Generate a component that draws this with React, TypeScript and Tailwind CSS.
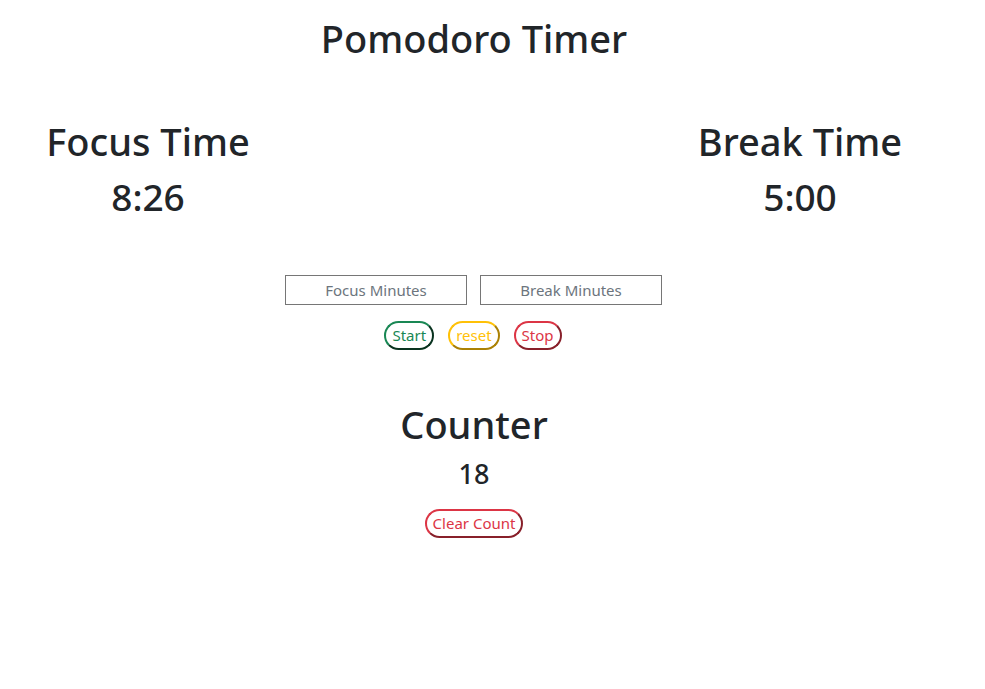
import React from "react";

const font = { fontFamily: '"Noto Sans", "Open Sans", sans-serif' };

export default function App() {
  return (
    <div className="w-[985px] h-[689px] bg-white text-[#212529]" style={font}>
      <div className="w-[948px] flex flex-col items-center">
        <h1 className="mt-4 text-[38px] leading-[44px] font-medium">Pomodoro Timer</h1>

        <div className="w-full flex justify-between mt-[59px]">
          <div className="w-[296px] flex flex-col items-center">
            <h1 className="text-[38px] leading-[44px] font-medium">Focus Time</h1>
            <h1 className="mt-3 text-[37px] leading-[44px] font-medium">8:26</h1>
          </div>
          <div className="w-[296px] flex flex-col items-center">
            <h1 className="text-[38px] leading-[44px] font-medium">Break Time</h1>
            <h1 className="mt-3 text-[37px] leading-[44px] font-medium">5:00</h1>
          </div>
        </div>

        <div className="mt-[56px] flex gap-[13px] ml-[-1px]">
          <input
            placeholder="Focus Minutes"
            className="w-[182px] h-[30px] border border-[#767676] text-center text-[15px] placeholder:text-[#6c757d] outline-none"
          />
          <input
            placeholder="Break Minutes"
            className="w-[182px] h-[30px] border border-[#767676] text-center text-[15px] placeholder:text-[#6c757d] outline-none"
          />
        </div>

        <div className="mt-4 flex gap-[14px] ml-[-2px]">
          <button className="h-[29px] px-[6px] rounded-full border-2 [border-style:outset] border-[#198754] text-[#198754] text-[15px] leading-none">
            Start
          </button>
          <button className="h-[29px] px-[6px] rounded-full border-2 [border-style:outset] border-[#ffc107] text-[#ffc107] text-[15px] leading-none">
            reset
          </button>
          <button className="h-[29px] px-[6px] rounded-full border-2 [border-style:outset] border-[#dc3545] text-[#dc3545] text-[15px] leading-none">
            Stop
          </button>
        </div>

        <h1 className="mt-[52px] text-[38px] leading-[44px] font-medium">Counter</h1>
        <h3 className="mt-3 text-[27px] leading-[32px] font-medium">18</h3>
        <button className="mt-[19px] h-[29px] px-[6px] rounded-full border-2 [border-style:outset] border-[#dc3545] text-[#dc3545] text-[15px] leading-none">
          Clear Count
        </button>
      </div>
    </div>
  );
}
